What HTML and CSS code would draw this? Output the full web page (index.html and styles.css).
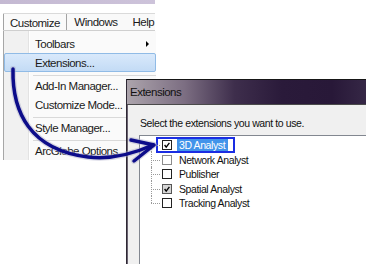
FILE: index.html
```html
<!DOCTYPE html>
<html lang="en">
<head>
    <meta charset="UTF-8">
    <meta name="viewport" content="width=device-width, initial-scale=1.0">
    <title>Customize - Extensions</title>
    <link rel="stylesheet" href="styles.css">
</head>
<body>
    <div class="screen">
        <div class="app">
            <div class="title-strip"></div>
            <div class="menubar">
                <span class="menu-top open">Customize</span>
                <span class="menu-top">Windows</span>
                <span class="menu-top">Help</span>
            </div>
            <ul class="dropdown">
                <li class="item">Toolbars<span class="submenu"></span></li>
                <li class="item active">Extensions...</li>
                <li class="sep"></li>
                <li class="item">Add-In Manager...</li>
                <li class="item">Customize Mode...</li>
                <li class="sep"></li>
                <li class="item">Style Manager...</li>
                <li class="sep"></li>
                <li class="item">ArcGlobe Options</li>
            </ul>
        </div>

        <div class="dialog">
            <div class="dialog-title">Extensions</div>
            <div class="dialog-body">
                <p class="prompt">Select the extensions you want to use.</p>
                <ul class="ext-list">
                    <li class="ext">
                        <span class="branch"></span>
                        <span class="callout">
                            <span class="box">
                                <svg viewBox="0 0 10 10"><path d="M2 5l2 2.6 4-5.2"/></svg>
                            </span>
                            <span class="ext-name selected">3D Analyst</span>
                        </span>
                    </li>
                    <li class="ext">
                        <span class="branch"></span>
                        <span class="box faint"></span>
                        <span class="ext-name">Network Analyst</span>
                    </li>
                    <li class="ext">
                        <span class="branch"></span>
                        <span class="box"></span>
                        <span class="ext-name">Publisher</span>
                    </li>
                    <li class="ext">
                        <span class="branch"></span>
                        <span class="box grey">
                            <svg viewBox="0 0 10 10"><path d="M2 5l2 2.6 4-5.2"/></svg>
                        </span>
                        <span class="ext-name">Spatial Analyst</span>
                    </li>
                    <li class="ext">
                        <span class="branch"></span>
                        <span class="box"></span>
                        <span class="ext-name">Tracking Analyst</span>
                    </li>
                </ul>
            </div>
        </div>

        <svg class="arrow" viewBox="0 0 366 264" width="366" height="264">
            <g class="halo">
                <path d="M13 69C12 112 30 150 88 157C112 160 135 153 153 145"/>
                <path d="M131 140L154 145L134 161"/>
            </g>
            <g class="stroke">
                <path d="M13 69C12 112 30 150 88 157C112 160 135 153 153 145"/>
                <path d="M131 140L154 145L134 161"/>
            </g>
        </svg>
    </div>
</body>
</html>
```

FILE: styles.css
```css
body {
    margin: 0;
    background-color: #fff;
    font-family: "Liberation Sans", Arial, sans-serif;
    color: #1a1a1a;
}

ul {
    margin: 0;
    padding: 0;
    list-style: none;
}

.screen {
    position: relative;
    width: 366px;
    height: 264px;
    overflow: hidden;
}

/* menu on the left */
.title-strip {
    width: 155px;
    height: 4px;
    background-image: linear-gradient(90deg, #c4b9d2, #cdc3da);
}

.menubar {
    display: flex;
    width: 152px;
    height: 18px;
    margin: 9px 0 0 3px;
    box-sizing: border-box;
    border-top: 1px solid #dadada;
    border-bottom: 1px solid #cfcfcf;
    background-color: #f9f9f9;
    overflow: hidden;
    font-size: 11.5px;
    letter-spacing: -0.5px;
}

.menu-top {
    padding: 0 7.5px;
    line-height: 16px;
    white-space: nowrap;
}

.menu-top.open {
    margin: -1px 0 -1px 0;
    padding: 0 6px;
    line-height: 18px;
    border: 1px solid #a3a3a3;
    border-bottom: none;
    background-color: #fafafa;
}

.dropdown {
    width: 153px;
    height: 129px;
    margin-left: 3px;
    padding-top: 3px;
    box-sizing: border-box;
    border-left: 1px solid #a7a7a7;
    background-image: linear-gradient(90deg, #f1f1f1 24px, #e3e3e3 24px, #e3e3e3 25px, #fff 25px, #fff 26px, #fafafa 26px);
    font-size: 11.5px;
    letter-spacing: -0.5px;
}

.item {
    position: relative;
    display: flex;
    align-items: center;
    height: 19px;
    padding-left: 31px;
    box-sizing: border-box;
}

.item.active {
    padding-left: 30px;
    border: 1px solid #90bbe6;
    border-radius: 2px;
    background-image: linear-gradient(#d9e9fb, #c3dbf5);
}

.submenu {
    margin-left: auto;
    margin-right: 7px;
    border-left: 3px solid #000;
    border-top: 3px solid transparent;
    border-bottom: 3px solid transparent;
}

.sep {
    height: 4px;
    margin-left: 29px;
    box-sizing: border-box;
    border-bottom: 1px solid #d9d9d9;
}

/* Extensions dialog */
.dialog {
    position: absolute;
    left: 126px;
    top: 79px;
    width: 250px;
    height: 190px;
    border-left: 1px solid #2e2834;
    box-shadow: inset 1px 0 #6a6270;
    background-color: #f0f0f0;
}

.dialog-title {
    height: 26px;
    padding-left: 3px;
    box-sizing: border-box;
    border-top: 1px solid #161616;
    border-bottom: 1px solid #4a4a4a;
    background-color: #2a1a3a;
    background-image: linear-gradient(90deg, #aca4ac 0%, #7c6e82 23%, #3e2e4c 43%, #2a1a3a 62%, #281838 82%, #3a2c4a 100%);
    font-size: 11.5px;
    letter-spacing: -0.5px;
    line-height: 24px;
    color: #111;
}

.dialog-body {
    padding: 11.5px 0 0 13px;
    font-size: 10.5px;
    letter-spacing: -0.4px;
    color: #111;
}

.prompt {
    margin: 0;
    line-height: 13px;
}

.ext-list {
    height: 140px;
    margin: 5.5px 0 0 -1px;
    padding-top: 1.75px;
    border-top: 1px solid #828790;
    border-left: 1px solid #828790;
    background-color: #fff;
}

.ext {
    display: flex;
    align-items: center;
    height: 14.5px;
}

.branch {
    position: relative;
    align-self: stretch;
    width: 22px;
    flex: none;
}

.branch::before {
    content: "";
    position: absolute;
    left: 11px;
    top: 0;
    bottom: 0;
    border-left: 1px dotted #9a9a9a;
}

.ext:first-child .branch::before {
    top: 50%;
}

.ext:last-child .branch::before {
    bottom: 50%;
}

.branch::after {
    content: "";
    position: absolute;
    left: 11px;
    top: 50%;
    width: 9px;
    border-top: 1px dotted #9a9a9a;
}

.box {
    display: flex;
    width: 10px;
    height: 10px;
    flex: none;
    box-sizing: border-box;
    border: 1px solid #222;
    background-color: #fff;
}

.box svg {
    width: 8px;
    height: 8px;
}

.box path {
    fill: none;
    stroke: #000;
    stroke-width: 1.7;
}

.box.faint {
    border-color: #8c8c8c;
}

.box.grey {
    border-color: #555;
    background-color: #d6d6d6;
}

.ext-name {
    margin-left: 7px;
    line-height: 12px;
    white-space: nowrap;
}

.callout {
    display: flex;
    align-items: center;
    height: 16px;
    margin-left: -6px;
    padding: 0 5px 0 4px;
    box-sizing: border-box;
    border: 2px solid #1a2de2;
    background-color: #fff;
}

.ext-name.selected {
    margin-left: 5px;
    padding: 0 3px 0 2px;
    background-color: #4294ea;
    color: #fff;
}

/* annotation arrow over both windows */
.arrow {
    position: absolute;
    left: 0;
    top: 0;
    pointer-events: none;
}

.arrow path {
    fill: none;
    stroke-linecap: round;
    stroke-linejoin: round;
}

.halo path {
    stroke: rgba(170, 170, 200, 0.45);
    stroke-width: 6;
}

.stroke path {
    stroke: #0c0c8a;
    stroke-width: 3.5;
}
```
